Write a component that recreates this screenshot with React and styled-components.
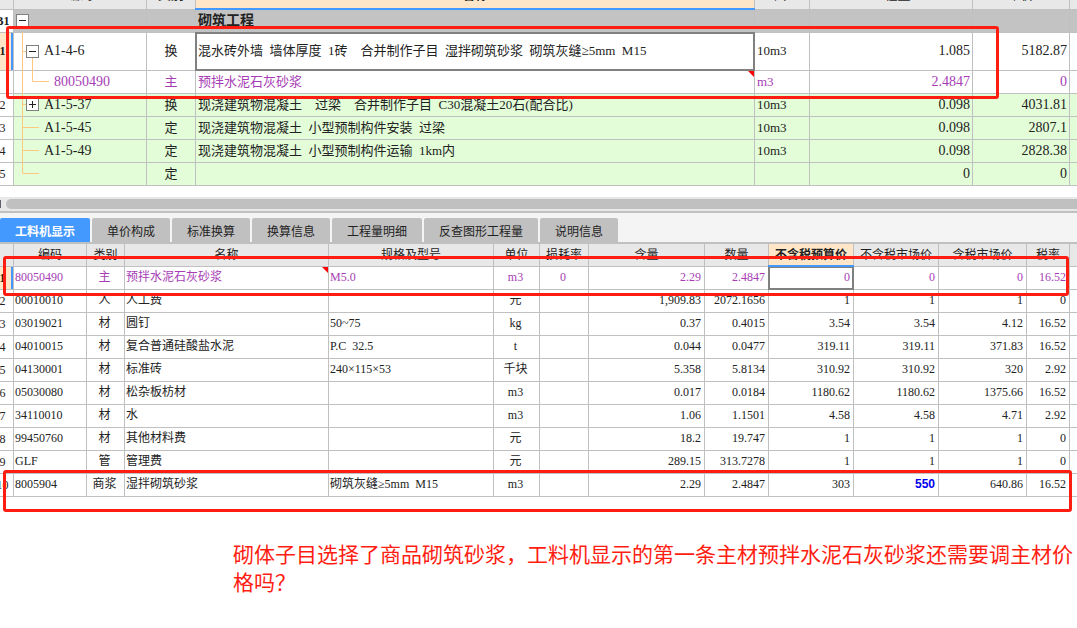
import React from "react"
import styled, { createGlobalStyle, css } from "styled-components"

const color = {
  line: "#c0c0c0",
  head: "#e8e8e8",
  text: "#222222",
  green: "#e2fdd8",
  peach: "#ffe6c8",
  blue: "#4499ff",
  purple: "#a63db5",
  branch: "#ffc880",
  red: "#ff1d12"
}

const items = [
  { no: "B1", toggle: "−", root: true, name: "砌筑工程", kind: "section" },
  { no: "1", code: "A1-4-6", type: "换", toggle: "−", parent: true, name: "混水砖外墙 墙体厚度 1砖  合并制作子目 湿拌砌筑砂浆 砌筑灰缝≥5mm M15", unit: "10m3", amount: "1.085", price: "5182.87", kind: "current" },
  { no: "", code: "80050490", type: "主", child: true, name: "预拌水泥石灰砂浆", unit: "m3", amount: "2.4847", price: "0", kind: "main" },
  { no: "2", code: "A1-5-37", type: "换", toggle: "+", name: "现浇建筑物混凝土  过梁  合并制作子目 C30混凝土20石(配合比)", unit: "10m3", amount: "0.098", price: "4031.81", kind: "green" },
  { no: "3", code: "A1-5-45", type: "定", name: "现浇建筑物混凝土 小型预制构件安装 过梁", unit: "10m3", amount: "0.098", price: "2807.1", kind: "green" },
  { no: "4", code: "A1-5-49", type: "定", name: "现浇建筑物混凝土 小型预制构件运输 1km内", unit: "10m3", amount: "0.098", price: "2828.38", kind: "green" },
  { no: "5", code: "", type: "定", last: true, name: "", unit: "", amount: "0", price: "0", kind: "green" }
]

const tabs = ["工料机显示", "单价构成", "标准换算", "换算信息", "工程量明细", "反查图形工程量", "说明信息"]

const resourceHeads = ["编码", "类别", "名称", "规格及型号", "单位", "损耗率", "含量", "数量", "不含税预算价", "不含税市场价", "含税市场价", "税率"]

const resources = [
  ["80050490", "主", "预拌水泥石灰砂浆", "M5.0", "m3", "0", "2.29", "2.4847", "0", "0", "0", "16.52"],
  ["00010010", "人", "人工费", "", "元", "", "1,909.83", "2072.1656", "1", "1", "1", "0"],
  ["03019021", "材", "圆钉", "50~75", "kg", "", "0.37", "0.4015", "3.54", "3.54", "4.12", "16.52"],
  ["04010015", "材", "复合普通硅酸盐水泥", "P.C 32.5", "t", "", "0.044", "0.0477", "319.11", "319.11", "371.83", "16.52"],
  ["04130001", "材", "标准砖", "240×115×53", "千块", "", "5.358", "5.8134", "310.92", "310.92", "320", "2.92"],
  ["05030080", "材", "松杂板枋材", "", "m3", "", "0.017", "0.0184", "1180.62", "1180.62", "1375.66", "16.52"],
  ["34110010", "材", "水", "", "m3", "", "1.06", "1.1501", "4.58", "4.58", "4.71", "2.92"],
  ["99450760", "材", "其他材料费", "", "元", "", "18.2", "19.747", "1", "1", "1", "0"],
  ["GLF", "管", "管理费", "", "元", "", "289.15", "313.7278", "1", "1", "1", "0"],
  ["8005904", "商浆", "湿拌砌筑砂浆", "砌筑灰缝≥5mm M15", "m3", "", "2.29", "2.4847", "303", "550", "640.86", "16.52"]
]

const aligns = ["left", "center", "left", "left", "center", "center", "right", "right", "right", "right", "right", "right"]

export default function App () {
  return (
    <Page>
      <GlobalStyle/>
      <Section>
        <ItemTable/>
        <Frame $top={26} $left={6} $right={78} $bottom={87}/>
      </Section>
      <ScrollTrack>
        <ScrollThumb/>
      </ScrollTrack>
      <TabBar>
        {
          tabs.map((tab, index) => <Tab key={tab} $active={index === 0}>{tab}</Tab>)
        }
      </TabBar>
      <Section>
        <ResourceTable/>
        <Frame $top={12} $left={3} $right={8} $bottom={201}/>
        <Frame $top={226} $left={3} $right={5} $bottom={-15}/>
      </Section>
      <Question>
        砌体子目选择了商品砌筑砂浆，工料机显示的第一条主材预拌水泥石灰砂浆还需要调主材价格吗？
      </Question>
    </Page>
  )
}

function ItemTable () {
  return (
    <Table $size={13}>
      <colgroup>
        <Col $width={14}/>
        <Col $width={133}/>
        <Col $width={49}/>
        <Col/>
        <Col $width={55}/>
        <Col $width={163}/>
        <Col $width={97}/>
        <Col $width={7}/>
      </colgroup>
      <thead>
        <tr>
          <CutHead/>
          {
            ["编码", "类别", "名称", "单位", "工程量", "单价"].map(head => (
              <CutHead key={head} $active={head === "名称"}><span>{head}</span></CutHead>
            ))
          }
          <CutHead/>
        </tr>
      </thead>
      <tbody>
        {
          items.map((item, index) => (
            <Row key={index} $kind={item.kind}>
              <IndexCell $current={item.kind === "current"} $bold={item.root}><span>{item.no}</span></IndexCell>
              <Cell>
                <Tree $indent={item.child ? 40 : 30}>
                  <Branch item={item}/>
                  {item.toggle && (
                    <Toggle $root={item.root} aria-label={item.toggle === "+" ? "展开" : "折叠"}>
                      <svg width="11" height="11" stroke="#222222">
                        <path d={item.toggle === "+" ? "M2 5.5H9M5.5 2V9" : "M2 5.5H9"}/>
                      </svg>
                    </Toggle>
                  )}
                  <Code>{item.code}</Code>
                </Tree>
              </Cell>
              <Cell $align="center">{item.type}</Cell>
              <Cell $selected={item.kind === "current"}>
                {spaced(item.name)}
                {item.kind === "main" && <Corner/>}
              </Cell>
              <Cell>{item.unit}</Cell>
              <Cell $align="right"><Code>{item.amount}</Code></Cell>
              <Cell $align="right"><Code>{item.price}</Code></Cell>
              <Cell/>
            </Row>
          ))
        }
      </tbody>
    </Table>
  )
}

// half-width gaps between the parts of a description
function spaced (text) {
  return text.replace(/ /g, "\u2002")
}

function Branch ({ item }) {
  if (item.root) return null
  if (item.child) {
    return <Lines><path d="M8.5 -1V23M18.5 -13V10.5H35"/></Lines>
  }
  if (item.parent) {
    return <Lines><path d="M8.5 -1V38M8.5 18.5H12"/></Lines>
  }
  return <Lines><path d={item.last ? "M8.5 -1V10.5H25" : "M8.5 -1V23M8.5 10.5H25"}/></Lines>
}

function ResourceTable () {
  return (
    <Table $size={12}>
      <colgroup>
        {
          [14, 73, 38, 0, 165, 46, 49, 116, 64, 85, 85, 88, 43, 7].map((width, index) => (
            <Col key={index} $width={width}/>
          ))
        }
      </colgroup>
      <thead>
        <tr>
          <Head/>
          {
            resourceHeads.map((head, index) => <Head key={head} $active={index === 8}>{head}</Head>)
          }
          <Head/>
        </tr>
      </thead>
      <tbody>
        {
          resources.map((row, index) => (
            <Row key={row[0]} $kind={index === 0 ? "main" : "plain"}>
              <IndexCell $current={index === 0}><span>{index + 1}</span></IndexCell>
              {
                row.map((value, column) => (
                  <ResourceCell key={column} $align={aligns[column]} $selected={index === 0 && column === 8}>
                    {value === "550" ? <Edited>{value}</Edited> : spaced(value)}
                    {index === 0 && column === 2 && <Corner/>}
                  </ResourceCell>
                ))
              }
              <Cell/>
            </Row>
          ))
        }
      </tbody>
    </Table>
  )
}

const GlobalStyle = createGlobalStyle`
  * {
    box-sizing: border-box;
  }
  body {
    margin: 0;
    background: #ffffff;
    overflow: hidden;
  }
`

const Page = styled.main`
  color: ${color.text};
  font-family: "Liberation Serif", "Noto Sans CJK SC", sans-serif;
`

const Section = styled.section`
  position: relative;
`

const Table = styled.table`
  width: 100%;
  table-layout: fixed;
  border-spacing: 0;
  font-size: ${props => props.$size}px;
  line-height: 16px;
  white-space: nowrap;

  th:last-child,
  td:last-child {
    border-right: 0;
  }
`

const Col = styled.col`
  width: ${props => props.$width ? `${props.$width}px` : "auto"};
`

const Head = styled.th`
  position: relative;
  height: 23px;
  padding: 0;
  background: ${props => props.$active ? color.peach : color.head};
  border-right: 1px solid ${color.line};
  border-bottom: 1px solid ${color.line};
  font-weight: ${props => props.$active ? "bold" : "normal"};
  ${props => props.$active && css`
    &::after {
      content: "";
      position: absolute;
      z-index: 2;
      inset: auto -1px -1px -1px;
      height: 2px;
      background: ${color.blue};
    }
  `}
`

// header row scrolled mostly out of view
const CutHead = styled(Head)`
  height: 10px;
  line-height: 0;

  span {
    display: flex;
    height: 9px;
    padding-bottom: 6px;
    align-items: flex-end;
    justify-content: center;
    overflow: hidden;
    line-height: 16px;
  }
`

const Cell = styled.td`
  position: relative;
  height: 23px;
  padding: 0 2px;
  border-right: 1px solid ${color.line};
  border-bottom: 1px solid ${color.line};
  text-align: ${props => props.$align || "left"};
  ${props => props.$selected && css`
    &::after {
      content: "";
      position: absolute;
      z-index: 1;
      inset: -1px;
      border: 2px solid #808080;
    }
  `}
`

const ResourceCell = styled(Cell)`
  padding: 0 3px 2px 1px;
`

const IndexCell = styled(Cell)`
  padding: 0 8px 0 0;
  background: ${props => props.$current ? color.peach : "#ffffff"};
  color: ${color.text};
  font-size: 12px;
  font-weight: ${props => props.$current || props.$bold ? "bold" : "normal"};
  box-shadow: ${props => props.$current ? `inset -2px 0 ${color.blue}` : "none"};

  span {
    display: flex;
    justify-content: center;
  }
`

const rowKinds = {
  section: css`
    background: #c3c3c3;
    font-size: 14px;
    font-weight: bold;
  `,
  current: css`
    ${Cell} {
      height: 38px;
      padding-bottom: 2px;
    }
  `,
  main: css`
    color: ${color.purple};
  `,
  green: css`
    background: ${color.green};
  `
}

const Row = styled.tr`
  ${props => rowKinds[props.$kind]}
`

const Code = styled.span`
  font-size: 14px;
`

const Tree = styled.div`
  display: flex;
  align-items: center;
  min-height: 16px;
  padding-left: ${props => props.$indent - 2}px;
`

const Lines = styled.svg`
  position: absolute;
  top: 0;
  left: 0;
  width: 36px;
  height: 100%;
  overflow: visible;
  fill: none;
  stroke: ${color.branch};
`

const Toggle = styled.button`
  position: absolute;
  z-index: 1;
  top: calc(50% - 7px);
  left: ${props => props.$root ? 2 : 12}px;
  display: flex;
  width: 13px;
  height: 13px;
  padding: 0;
  background: #ffffff;
  border: 1px solid #808080;
`

const Corner = styled.i`
  position: absolute;
  top: 0;
  right: 0;
  width: 6px;
  height: 6px;
  background: #ff0000;
  clip-path: polygon(0 0, 100% 0, 100% 100%);
`

const Edited = styled.b`
  color: #0000ee;
  font-family: "Liberation Sans", sans-serif;
`

const Frame = styled.div`
  position: absolute;
  z-index: 3;
  top: ${props => props.$top}px;
  right: ${props => props.$right}px;
  bottom: ${props => props.$bottom}px;
  left: ${props => props.$left}px;
  border: 3px solid ${color.red};
  border-radius: 3px;
  pointer-events: none;
`

const ScrollTrack = styled.div`
  display: flex;
  gap: 5px;
  height: 14px;
  margin-top: 11px;
  padding: 2px 0;
  background: ${color.head};

  &::before {
    content: "";
    width: 1px;
    margin: 1px 0;
    background: #606068;
  }
`

const ScrollThumb = styled.div`
  flex: 1;
  background: ${color.line};
  border-radius: 5px 0 0 5px;
`

const TabBar = styled.nav`
  display: flex;
  gap: 2px;
  padding-top: 5px;
  background: #f4f4f4;
  border-top: 2px solid ${color.line};
  border-bottom: 2px solid ${color.line};
`

const Tab = styled.button`
  height: 24px;
  padding: 0 15px;
  background: ${props => props.$active ? color.blue : color.line};
  border: 0;
  border-radius: 2px 2px 0 0;
  color: ${props => props.$active ? "#ffffff" : color.text};
  font-family: "Noto Sans CJK SC", sans-serif;
  font-size: 12px;
  font-weight: ${props => props.$active ? "bold" : "normal"};
`

const Question = styled.p`
  margin: 42px 0 0;
  padding-left: 233px;
  color: ${color.red};
  font-family: "Noto Sans CJK SC", sans-serif;
  font-size: 21px;
  line-height: 28px;
`
